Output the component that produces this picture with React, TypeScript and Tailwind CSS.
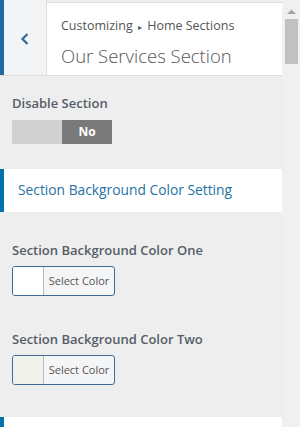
import React from "react";

function ColorButton({ swatch }: { swatch: string }) {
  return (
    <div className="flex h-[30px] w-[103px] overflow-hidden rounded-[3px] border border-[#3d6b94] bg-[#f3f5f6]">
      <div className={`w-[31px] border-r border-[#b5bcc2] ${swatch}`} />
      <div className="flex flex-1 items-center justify-center text-[11px] text-[#555]">Select Color</div>
    </div>
  );
}

export default function App() {
  return (
    <div className="flex h-[427px] w-[300px] overflow-hidden bg-[#eeeeee]" style={{ fontFamily: '"Open Sans", sans-serif' }}>
      <div className="flex w-[282px] flex-col">
        {/* Header */}
        <div className="flex h-[76px] shrink-0 border-b border-[#dddddd]">
          <div className="w-[4px] bg-[#1e6ba8]" />
          <div className="flex w-[43px] items-center justify-center border-r border-[#dddddd] bg-[#f3f4f5] pt-[3px]">
            <svg width="10" height="14" viewBox="0 0 10 14" fill="none">
              <path d="M7.5 2 L2.5 7 L7.5 12" stroke="#2e6a9e" strokeWidth="2.2" />
            </svg>
          </div>
          <div className="mt-[2px] flex flex-1 flex-col border-t border-[#dddddd] bg-white pl-[14px] pt-[14px]">
            <div className="text-[12.5px] leading-[18px] text-[#555]">
              Customizing <span className="mx-[2px] text-[8px] align-middle">▸</span> Home Sections
            </div>
            <div className="mt-[7px] text-[18.5px] font-light leading-[26px] text-[#555]">Our Services Section</div>
          </div>
        </div>

        {/* Disable section */}
        <div className="px-[12px] pt-[17px]">
          <div className="text-[13px] font-semibold leading-[20px] text-[#555d66]">Disable Section</div>
          <div className="mt-[7px] flex h-[24px] w-[100px]">
            <div className="w-[50px] bg-[#d1d1d1]" />
            <div className="flex w-[50px] items-center justify-center bg-[#7a7a7a] text-[12px] font-bold text-white">No</div>
          </div>
        </div>

        {/* Section heading */}
        <div className="mt-[25px] flex h-[43px] shrink-0 bg-white">
          <div className="w-[4px] bg-[#0073aa]" />
          <div className="flex items-center pl-[14px] text-[13.8px] text-[#1f72a4]">Section Background Color Setting</div>
        </div>

        {/* Color One */}
        <div className="px-[12px] pt-[28px]">
          <div className="text-[13px] font-semibold leading-[20px] text-[#555d66]">Section Background Color One</div>
          <div className="mt-[6px]">
            <ColorButton swatch="bg-white" />
          </div>
        </div>

        {/* Color Two */}
        <div className="px-[12px] pt-[33px]">
          <div className="text-[13px] font-semibold leading-[20px] text-[#555d66]">Section Background Color Two</div>
          <div className="mt-[6px]">
            <ColorButton swatch="bg-[#f1f1ec]" />
          </div>
        </div>

        {/* Next section */}
        <div className="mt-[32px] flex h-[43px] shrink-0 bg-white">
          <div className="w-[4px] bg-[#0073aa]" />
        </div>
      </div>

      {/* Scrollbar */}
      <div className="flex w-[18px] flex-col items-center bg-[#f0f0f0]">
        <svg width="9" height="6" viewBox="0 0 9 6" className="mt-[9px]">
          <path d="M0 5 L4.5 0.5 L9 5 Z" fill="#a3a3a3" />
        </svg>
        <div className="mt-[4px] h-[45px] w-[13px] bg-[#c1c1c1]" />
      </div>
    </div>
  );
}
